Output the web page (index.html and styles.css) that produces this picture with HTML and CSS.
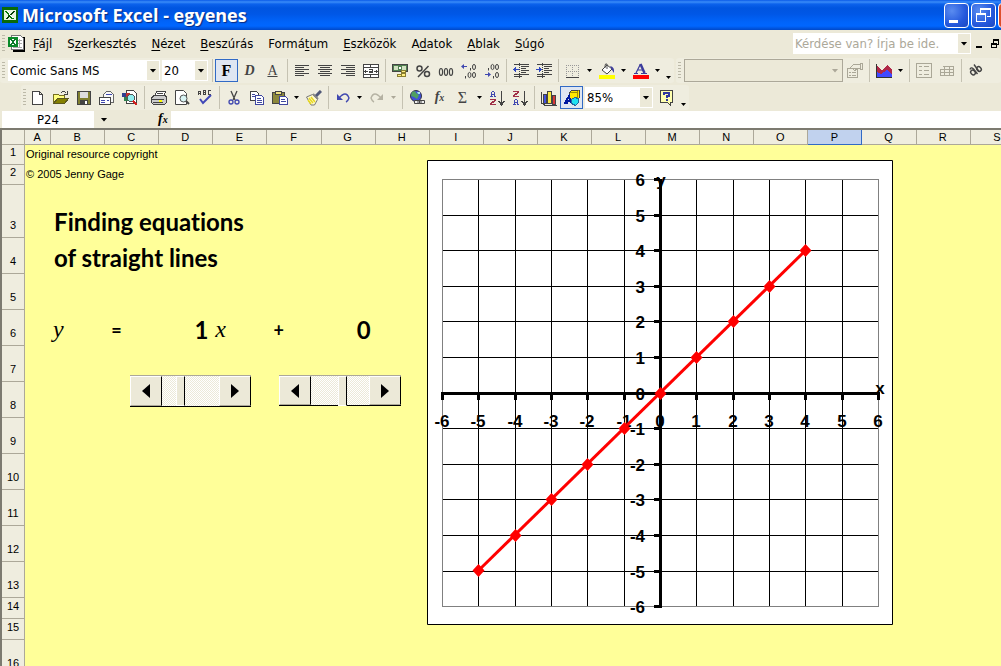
FILE: index.html
```html
<!DOCTYPE html>
<html lang="hu">
<head>
<meta charset="utf-8">
<title>Microsoft Excel - egyenes</title>
<link rel="stylesheet" href="styles.css">
</head>
<body>
<div class="app">
<header class="titlebar">
  <svg class="app-icon" width="16" height="16" viewBox="0 0 16 16" shape-rendering="crispEdges"><path fill="#0a6a0a" d="M0 0h16v16H0z"/><path fill="#e8f4e0" d="M2 3h12v10H2z"/><path fill="#0a7a0a" d="M3 4h3l6 8H9z"/><path fill="#053f05" d="M11 4h2L6 12H4z"/><path fill="#fff" d="M5 4h1l5 7h-1z"/></svg>
  <h1>Microsoft Excel - egyenes</h1>
  <div class="window-buttons">
    <button class="win" aria-label="Kis méret"><svg width="23" height="23"><path fill="#fff" d="M4 16h9v3H4z"/></svg></button>
    <button class="win" aria-label="Előző méret"><svg width="23" height="23" fill="none" stroke="#fff" shape-rendering="crispEdges"><path d="M8.500 9V4.500h10v8H15M8 5.500h11M4.500 9.500h9v8h-9zM4 10.500h10"/></svg></button>
    <button class="win close" aria-label="Bezárás"></button>
  </div>
</header>

<nav class="menubar">
  <span class="grip"></span>
  <svg class="doc-icon" width="18" height="18" viewBox="0 0 18 18" shape-rendering="crispEdges"><path fill="#000" d="M5 2h12v15H5z"/><path fill="#fff" stroke="#777" d="M3.500 .5h9l3 3v11h-12z"/><path stroke="#aaa" d="M9 5.500h5M9 8.500h5M5 12.500h9M11.500 4v9"/><path fill="#0a8a2a" d="M0 2h10v10H0z"/><path fill="#fff" d="M2 4h6v6H2z"/><path fill="#0a7a2a" d="M2 4h2l4 6H6zM6 4h2l-4 6H2z"/></svg>
  <button><u>F</u>ájl</button><button>S<u>z</u>erkesztés</button><button><u>N</u>ézet</button><button><u>B</u>eszúrás</button><button>Formá<u>t</u>um</button><button><u>E</u>szközök</button><button>A<u>d</u>atok</button><button><u>A</u>blak</button><button><u>S</u>úgó</button>
  <div class="combo ask"><input type="text" aria-label="Kérdés" placeholder="Kérdése van? Írja be ide."><span class="drop"><i class="caret"></i></span></div>
  <button class="mdi" aria-label="Munkafüzet kis méret"><svg width="6" height="12"><path d="M0 8h6v2H0z"/></svg></button>
  <button class="mdi" aria-label="Munkafüzet előző méret"><svg width="12" height="12" fill="none" stroke="#000" shape-rendering="crispEdges"><path d="M3.500 5V1.500h5v5H7M3 2.500h6M1.500 5.500h5v4h-5zM1 6.500h6"/></svg></button>
</nav>

<div class="toolrow">
  <div class="toolbar first">
    <span class="grip"></span>
    <div class="combo font"><select aria-label="Betűtípus"><option>Comic Sans MS</option></select><span class="drop"><i class="caret"></i></span></div>
    <div class="combo size"><select aria-label="Betűméret"><option>20</option></select><span class="drop"><i class="caret"></i></span></div>
    <span class="sep"></span>
    <button class="tool letter on" aria-label="Félkövér"><b>F</b></button>
    <button class="tool letter" aria-label="Dőlt"><i>D</i></button>
    <button class="tool letter" aria-label="Aláhúzott"><u>A</u></button>
    <span class="sep"></span>
    <button class="tool" aria-label="Balra zárt"><svg class="ic" viewBox="0 0 16 16" stroke="#444"><path d="M1 2.500h14M1 4.500h9M1 6.500h14M1 8.500h9M1 10.500h14M1 12.500h9"/></svg></button>
    <button class="tool" aria-label="Középre zárt"><svg class="ic" viewBox="0 0 16 16" stroke="#444"><path d="M1 2.500h14M3 4.500h10M1 6.500h14M3 8.500h10M1 10.500h14M3 12.500h10"/></svg></button>
    <button class="tool" aria-label="Jobbra zárt"><svg class="ic" viewBox="0 0 16 16" stroke="#444"><path d="M1 2.500h14M6 4.500h9M1 6.500h14M6 8.500h9M1 10.500h14M6 12.500h9"/></svg></button>
    <button class="tool" aria-label="Cellaegyesítés"><svg class="ic" viewBox="0 0 16 16" fill="none" stroke="#444"><path fill="#fff" d="M.5 1.500h15v13H.5z"/><path d="M0 4.500h16M0 11.500h16M7.500 1v3M7.500 12v3M1 8.500h4M2.500 7v3M11 8.500h4M13.500 7v3M6 6.500h3.500v3.500M9 9.500H6.500V8H9"/></svg></button>
    <span class="sep"></span>
    <button class="tool" aria-label="Pénznem"><svg class="ic" viewBox="0 0 16 16"><path fill="#508050" stroke="#444" d="M.5 1.500h15v7H.5z"/><path fill="#cfe0bf" d="M2 3h12v4H2z"/><path fill="#508050" d="M6 3h4v4H6z"/><path fill="#fff" d="M7 4h2v2H7z"/><path fill="#fff080" stroke="#8a7d30" d="M9.500 7.500h4v2h-4zM9.500 10.500h4v3h-4zM5.500 11.500h4v2h-4z"/></svg></button>
    <button class="tool" aria-label="Százalék"><svg class="ic smooth" viewBox="0 0 16 16" fill="none" stroke="#444" stroke-width="1.500"><circle cx="4.500" cy="5.500" r="2.500"/><circle cx="12" cy="11" r="2.500"/><path d="M13.500 3 3 14"/></svg></button>
    <button class="tool" aria-label="Ezres csoport"><svg class="ic smooth" viewBox="0 0 16 16" fill="none" stroke="#444" stroke-width="1.200"><ellipse cx="3" cy="9" rx="1.600" ry="3.500"/><ellipse cx="8" cy="9" rx="1.600" ry="3.500"/><ellipse cx="13" cy="9" rx="1.600" ry="3.500"/></svg></button>
    <button class="tool" aria-label="Tizedeshelyek növelése"><svg class="ic smooth" viewBox="0 0 16 16" fill="none"><path fill="#4048b0" d="M0 3.500 3 1v2h3v1H3v2z"/><g stroke="#444"><ellipse cx="13" cy="4" rx="1.500" ry="2.600"/><ellipse cx="8.500" cy="12" rx="1.500" ry="2.600"/><ellipse cx="13" cy="12" rx="1.500" ry="2.600"/><path d="M9.500 5v2.500M4.500 13v2.500"/></g></svg></button>
    <button class="tool" aria-label="Tizedeshelyek csökkentése"><svg class="ic smooth" viewBox="0 0 16 16" fill="none"><path fill="#4048b0" d="M7 11.500 4 9v2H1v1h3v2z"/><g stroke="#444"><ellipse cx="8.500" cy="4" rx="1.500" ry="2.600"/><ellipse cx="13" cy="4" rx="1.500" ry="2.600"/><ellipse cx="13" cy="12" rx="1.500" ry="2.600"/><path d="M4.500 5v2.500M9.500 13v2.500"/></g></svg></button>
    <span class="sep"></span>
    <button class="tool" aria-label="Behúzás csökkentése"><svg class="ic" viewBox="0 0 16 16"><path stroke="#444" d="M1 1.500h15M8 3.500h8M8 5.500h5M8 7.500h8M8 9.500h5M1 11.500h15M1 13.500h8"/><path stroke="#444" stroke-dasharray="1 1" d="M6.500 0v16"/><path fill="#3048c0" d="M3 4v5L0 6.500zM3 6h3v1H3z"/></svg></button>
    <button class="tool" aria-label="Behúzás növelése"><svg class="ic" viewBox="0 0 16 16"><path stroke="#444" d="M1 1.500h15M8 3.500h8M8 5.500h5M8 7.500h8M8 9.500h5M1 11.500h15M1 13.500h8"/><path stroke="#444" stroke-dasharray="1 1" d="M6.500 0v16"/><path fill="#3048c0" d="M3 4v5l3-2.500zM0 6h3v1H0z"/></svg></button>
    <span class="sep"></span>
    <button class="tool" aria-label="Szegélyek"><svg class="ic" viewBox="0 0 16 16" fill="none" stroke="#999"><path stroke-dasharray="1 1" d="M1 2.500h13M1 8.500h13M1.500 2v12M7.500 2v12M13.500 2v12"/><path stroke="#444" d="M1 14.500h13"/></svg></button><button class="more" aria-label="Szegélyválaszték"><i class="caret"></i></button>
    <button class="tool" aria-label="Kitöltőszín"><svg class="ic smooth" viewBox="0 0 16 16"><path fill="#fff" stroke="#444" d="m8 2 5 4-5 5-5-4z"/><path fill="none" stroke="#555" d="M8 6V1q-2-1-2 2v2"/><path fill="#4040a0" d="M11 3q5 1 4 7l-2-3z"/><path fill="#ff0" d="M0 12h16v4H0z"/></svg></button><button class="more" aria-label="Kitöltőszínek"><i class="caret"></i></button>
    <button class="tool" aria-label="Betűszín"><svg class="ic smooth" viewBox="0 0 16 16"><path fill="none" stroke="#3c3c9c" stroke-width="1.200" d="m3 10 4.500-9M5 7h5M1 10.500h4M8 10.500h6"/><path stroke="#3c3c9c" stroke-width="2.500" d="m7.500 1 4 9"/><path fill="red" d="M0 12h16v4H0z"/></svg></button><button class="more" aria-label="Betűszínek"><i class="caret"></i></button>
    <button class="more end" aria-label="Eszköztár beállításai"><i class="caret"></i></button>
  </div>
  <div class="toolbar second">
    <span class="grip"></span>
    <div class="combo object off"><select aria-label="Diagramobjektumok" disabled><option></option></select><span class="drop"><i class="caret"></i></span></div>
    <button class="tool" aria-label="Formázás" disabled><svg class="ic" viewBox="0 0 16 16" fill="none" stroke="#aaa797"><path d="M.5 5.500h10v9H.5zM2 9.500h2M5 9.500h4M2 12.500h2M5 12.500h4M3 5l4-4h6v4h-3L8 8 6 6M13 .5h2v6h-2z"/></svg></button>
    <span class="sep"></span>
    <button class="tool" aria-label="Diagramtípus"><svg class="ic" viewBox="0 0 16 16"><path fill="#b02848" d="m1 2 5 6 5-6 5 5v7H1z"/><path fill="#4048ff" d="m1 9 4 2 6-4 5 5v3H1z"/><path stroke="#333" d="M.5 1v14M0 14.500h16"/></svg></button><button class="more" aria-label="Diagramtípusok"><i class="caret"></i></button>
    <span class="sep"></span>
    <button class="tool" aria-label="Jelmagyarázat" disabled><svg class="ic" viewBox="0 0 16 16" fill="none" stroke="#aaa797"><path d="M.5 .5h15v14H.5zM3 3.500h3M3 7.500h3M3 11.500h3M8 3.500h5M8 7.500h5M8 11.500h5"/></svg></button>
    <button class="tool" aria-label="Adattábla" disabled><svg class="ic" viewBox="0 0 16 16" fill="none" stroke="#aaa797"><path d="M4 3.500h10.500v9h-13v-6H14M1 9.500h13M5.500 3v9M10.500 3v9"/></svg></button>
    <span class="sep"></span>
    <button class="tool" aria-label="Szöveg döntése"><svg class="ic smooth" viewBox="0 0 16 16" fill="none" stroke="#444" stroke-width="1.400"><ellipse cx="5" cy="9.500" rx="2.600" ry="2" transform="rotate(45 5 9.500)"/><path d="M2 6.500Q3 3.500 5.500 6l4 5"/><ellipse cx="11" cy="6" rx="2.600" ry="2" transform="rotate(45 11 6)"/><path d="m6 1.500 5 7"/></svg></button>
  </div>
</div>

<div class="toolrow">
  <div class="toolbar standard">
    <span class="grip"></span>
    <button class="tool" aria-label="Új"><svg class="ic" viewBox="0 0 16 16"><path fill="#fff" stroke="#444" d="M2.500 1.500h7l3 3v10h-10zM9.500 1.500v3h3"/></svg></button>
    <button class="tool" aria-label="Megnyitás"><svg class="ic" viewBox="0 0 16 16"><path fill="#ffff80" stroke="#777020" d="M.5 13.500v-9h5l1 1h5v3h-7l-4 5"/><path fill="#848000" stroke="#5b5820" d="M4.500 8.500h11l-4 5H.5z"/><path fill="none" stroke="#444" d="M8 3q3-3 5 0M11 4h3V1"/></svg></button>
    <button class="tool" aria-label="Mentés"><svg class="ic" viewBox="0 0 16 16"><path fill="#808030" stroke="#444" d="M1.500 1.500h13v13h-13z"/><path fill="#ddd" d="M4 2h8v6H4z"/><path fill="#444" d="M4 10h8v4H4z"/><path fill="#fff" d="M9 11h2v3H9z"/></svg></button>
    <button class="tool" aria-label="E-mail"><svg class="ic" viewBox="0 0 16 16"><path fill="#f8f8f8" stroke="#666" d="M4.500 7V4.500l3-3h4l3 3v8h-10z"/><path fill="#fff" stroke="#444" d="M.5 7.500h11v7H.5z"/><path stroke="#4048b0" d="M2 10.500h4M2 12.500h4M8 10.500h2M7 4.500h6"/></svg></button>
    <button class="tool" aria-label="Keresés"><svg class="ic" viewBox="0 0 16 16"><path fill="#fff" stroke="#444" d="M4.500 .5h7l3 3v10h-10z"/><path fill="#304090" d="M0 3h4v4H0z"/><path fill="#c03030" d="M4 3h4v4H4z"/><path fill="#308050" d="M2 7h4v4H2z"/><circle cx="9" cy="8" r="3.500" fill="#90f0f0" stroke="#555"/><path stroke="#d02020" stroke-width="2" d="m11 11 4 4"/></svg></button>
    <span class="sep"></span>
    <button class="tool" aria-label="Nyomtatás"><svg class="ic" viewBox="0 0 16 16"><path fill="#fff" stroke="#444" d="M5.500 1.500h9l-2 5h-9z"/><path fill="#ccc" stroke="#444" d="m1.500 6.500 2-1h11l1 2v5l-2 2h-11l-2-2v-4z"/><path stroke="#444" d="M1 9.500h12M2 12.500h10M6 3.500h6"/><path fill="#ff0" d="M8 10h3v2H8z"/></svg></button>
    <button class="tool" aria-label="Nyomtatási kép"><svg class="ic smooth" viewBox="0 0 16 16"><path fill="#fff" stroke="#444" d="M1.500 .5h8l3 3v11h-11z"/><circle cx="9.500" cy="8.500" r="3.500" fill="#d8f4f4" stroke="#555"/><path stroke="#444" stroke-width="2" d="m12 11 3 3"/></svg></button>
    <button class="tool" aria-label="Helyesírás"><svg class="ic" viewBox="0 0 16 16" fill="none"><path stroke="#444" d="M1.500 5V1.500h2V5M1 3.500h3M6.500 .5h2v4h-2zM6 2.500h3M14 .5h-2.500v4H14"/><path class="smooth" stroke="#4048b8" stroke-width="2" d="m3 9 3 4 8-8"/></svg></button>
    <span class="sep"></span>
    <button class="tool" aria-label="Kivágás"><svg class="ic smooth" viewBox="0 0 16 16" fill="none"><path stroke="#444" stroke-width="1.300" d="m5 1 4 9M11 1l-4 9"/><g stroke="#4048b0" stroke-width="1.300"><circle cx="5" cy="12" r="2"/><circle cx="11" cy="12" r="2"/></g></svg></button>
    <button class="tool" aria-label="Másolás"><svg class="ic" viewBox="0 0 16 16"><path fill="#fff" stroke="#444" d="M1.500 1.500h6l2 2v7h-8z"/><path fill="#fff" stroke="#4048a0" d="M6.500 5.500h6l2 2v7h-8z"/><path stroke="#4048a0" d="M3 4.500h3M3 6.500h3M8 8.500h4M8 10.500h5M8 12.500h5"/></svg></button>
    <button class="tool" aria-label="Beillesztés"><svg class="ic" viewBox="0 0 16 16"><path fill="#8c883c" stroke="#444" d="M.5 2.500h12v11H.5z"/><path fill="#eee080" stroke="#444" d="M3.500 1.500h6v3h-6z"/><path fill="#fff" stroke="#4048a0" d="M7.500 6.500h6l2 2v6h-8z"/><path stroke="#4048a0" d="M9 9.500h4M9 11.500h5"/></svg></button><button class="more" aria-label="Beillesztési lehetőségek"><i class="caret"></i></button>
    <button class="tool" aria-label="Formátummásoló"><svg class="ic smooth" viewBox="0 0 16 16"><path fill="#fffbd0" stroke="#777" d="m.5 7 6-2.500 5 5-3 5.500H5z"/><path stroke="#e8d820" stroke-width="1.500" d="m3 8 4 5m-2-6 4 5m-7-2 3 4"/><path stroke="#888" stroke-width="2" d="m7 4 5 5"/><path stroke="#505878" stroke-width="3" d="m10 6 5-5"/></svg></button>
    <span class="sep"></span>
    <button class="tool" aria-label="Visszavonás"><svg class="ic smooth" viewBox="0 0 16 16"><path fill="#4048b0" d="M2 4v6h6z"/><path fill="none" stroke="#4048b0" stroke-width="1.400" d="M4 8q7-8 10 0-1 3-3 4"/></svg></button><button class="more" aria-label="Visszavonási lista"><i class="caret"></i></button>
    <button class="tool" aria-label="Ismét" disabled><svg class="ic smooth" viewBox="0 0 16 16"><path fill="#b5b2a3" d="M14 4v6H8z"/><path fill="none" stroke="#b5b2a3" stroke-width="1.400" d="M12 8Q5 0 2 8q1 3 3 4"/></svg></button><button class="more" aria-label="Ismétlési lista" disabled><i class="caret"></i></button>
    <span class="sep"></span>
    <button class="tool" aria-label="Hivatkozás"><svg class="ic smooth" viewBox="0 0 16 16"><circle cx="7" cy="6" r="5.500" fill="#4050d8" stroke="#334"/><path fill="#50a060" d="M3 2q4-2 4 1l3 2-2 4-3-2-3-1z"/><path fill="#a8e8f0" d="M8 2h3v2H9z"/><path fill="#eee" stroke="#444" d="M5.500 10.500h5v3h-5zM10.500 10.500h5v3h-5z"/><path stroke="#444" d="M8 12h5"/></svg></button>
    <button class="tool fn" aria-label="Függvény"><i>f<small>x</small></i></button>
    <button class="tool fn sigma" aria-label="AutoSzum">Σ</button><button class="more" aria-label="AutoSzum lista"><i class="caret"></i></button>
    <button class="tool" aria-label="Rendezés növekvő"><svg class="ic" viewBox="0 0 16 16" fill="none"><path stroke="#4048b0" d="M2.500 7V3l1-2h1l1 2v4M2 4.500h4M1 6.500h3M5 6.500h2"/><path stroke="#a03048" stroke-width="1.500" d="M1 9.500h5v1l-4 3v1h5"/><path stroke="#444" stroke-width="1.500" d="M12.500 1v13M10 11l2.500 4 2.500-4"/></svg></button>
    <button class="tool" aria-label="Rendezés csökkenő"><svg class="ic" viewBox="0 0 16 16" fill="none"><path stroke="#a03048" stroke-width="1.500" d="M1 1.500h5v1l-4 3v1h5"/><path stroke="#4048b0" d="M2.500 15v-4l1-2h1l1 2v4M2 12.500h4M1 14.500h3M5 14.500h2"/><path stroke="#444" stroke-width="1.500" d="M12.500 1v13M10 11l2.500 4 2.500-4"/></svg></button>
    <span class="sep"></span>
    <button class="tool" aria-label="Diagramvarázsló"><svg class="ic" viewBox="0 0 16 16"><path fill="none" stroke="#444" d="M.5 2v11l3 2h12"/><path fill="#4050e0" stroke="#444" d="M2.500 4.500h3v9h-3z"/><path fill="#f8e840" stroke="#444" d="M6.500 1.500h4v12h-4z"/><path fill="#d83838" stroke="#444" d="M11.500 5.500h3v9h-3z"/></svg></button>
    <button class="tool on" aria-label="Rajz"><svg class="ic" viewBox="0 0 16 16"><path fill="#ffe800" stroke="#444" d="m5.500 2.500 2-2h8v7l-2 2h-8z"/><path fill="none" stroke="#a09000" d="M6 2.500h7.500v7M13 2l2-2"/><path fill="none" stroke="#0018a0" stroke-width="2" d="m1 13 4-7 2 7M0 13h4M3 11h4"/><path fill="#20e0f0" stroke="#2068a0" d="m7.500 9.500 3-2 4 1v4l-3 3-4-2z"/></svg></button>
    <div class="combo zoom"><input type="text" aria-label="Nagyítás" value="85%"><span class="drop"><i class="caret"></i></span></div>
    <button class="tool" aria-label="Súgó"><svg class="ic" viewBox="0 0 16 16"><path fill="#ffffb0" stroke="#444" d="M1.500 .5h12v12h-2v3l-3-3h-7z"/><path fill="none" stroke="#3038a0" stroke-width="2" d="M5 5V3h5v3H8v2M8 9v2"/></svg></button>
    <button class="more end" aria-label="Eszköztár beállításai"><i class="caret"></i></button>
  </div>
</div>

<div class="formulabar">
  <input class="namebox" type="text" aria-label="Név mező" value="P24">
  <button class="name-drop" aria-label="Nevek"><i class="caret wide"></i></button>
  <button class="fn insert-fn" aria-label="Függvény beszúrása"><i>f<small>x</small></i></button>
  <input class="formula" type="text" aria-label="Szerkesztőléc">
</div>

<main class="sheet">
  <table>
    <colgroup><col class="c-head"><col class="c-a"><col span="18" class="c-std"></colgroup>
    <thead><tr><th></th><th>A</th><th>B</th><th>C</th><th>D</th><th>E</th><th>F</th><th>G</th><th>H</th><th>I</th><th>J</th><th>K</th><th>L</th><th>M</th><th>N</th><th>O</th><th class="current">P</th><th>Q</th><th>R</th><th>S</th></tr></thead>
    <tbody>
      <tr class="r-small"><th>1</th><td class="note" colspan="19">Original resource copyright</td></tr>
      <tr class="r-small"><th>2</th><td class="note" colspan="19">© 2005 Jenny Gage</td></tr>
      <tr class="r-tall"><th>3</th><td></td><td class="comic" colspan="18">Finding equations</td></tr>
      <tr><th>4</th><td></td><td class="comic" colspan="18">of straight lines</td></tr>
      <tr><th>5</th><td colspan="19"></td></tr>
      <tr><th>6</th><td></td><td class="var">y</td><td class="comic sign">=</td><td class="comic num">1</td><td class="var">x</td><td class="comic sign">+</td><td class="comic num">0</td><td colspan="12"></td></tr>
      <tr><th>7</th><td colspan="19"></td></tr>
      <tr><th>8</th><td colspan="19"></td></tr>
      <tr><th>9</th><td colspan="19"></td></tr>
      <tr><th>10</th><td colspan="19"></td></tr>
      <tr><th>11</th><td colspan="19"></td></tr>
      <tr><th>12</th><td colspan="19"></td></tr>
      <tr><th>13</th><td colspan="19"></td></tr>
      <tr class="r-mid"><th>14</th><td colspan="19"></td></tr>
      <tr class="r-mid"><th>15</th><td colspan="19"></td></tr>
      <tr><th>16</th><td colspan="19"></td></tr>
    </tbody>
  </table>

  <div class="scroller slope"><button aria-label="Meredekség csökkentése"><svg width="8" height="14"><path d="M8 0v14L0 7z"/></svg></button><input type="range" aria-label="Meredekség" min="0" max="100" value="29"><button aria-label="Meredekség növelése"><svg width="8" height="14"><path d="M0 0v14l8-7z"/></svg></button></div>
  <div class="scroller intercept"><button aria-label="Tengelymetszet csökkentése"><svg width="8" height="14"><path d="M8 0v14L0 7z"/></svg></button><input type="range" aria-label="Tengelymetszet" min="0" max="100" value="56"><button aria-label="Tengelymetszet növelése"><svg width="8" height="14"><path d="M0 0v14l8-7z"/></svg></button></div>

  <svg class="chart" width="466" height="465" viewBox="0 0 466 465" role="img" aria-label="y = 1x + 0">
    <path fill="#fff" stroke="#000" d="M.5 .5h465v464H.5z"/>
    <path class="gridline" d="M51.500 19v428M88.500 19v428M124.500 19v428M160.500 19v428M197.500 19v428M269.500 19v428M306.500 19v428M342.500 19v428M378.500 19v428M415.500 19v428M15 55.500h437M15 90.500h437M15 126.500h437M15 161.500h437M15 197.500h437M15 268.500h437M15 304.500h437M15 339.500h437M15 375.500h437M15 411.500h437"/>
    <path class="frame" d="M15.500 19.500h436v427h-436z"/>
    <path class="axis" d="M14 233.500h439M233.500 19v429"/>
    <path class="axis" d="M227 19.500h6M227 55.500h6M227 90.500h6M227 126.500h6M227 161.500h6M227 197.500h6M227 233.500h6M227 268.500h6M227 304.500h6M227 339.500h6M227 375.500h6M227 411.500h6M227 446.500h6M15.500 234v6M51.500 234v6M88.500 234v6M124.500 234v6M160.500 234v6M197.500 234v6M233.500 234v6M269.500 234v6M306.500 234v6M342.500 234v6M378.500 234v6M415.500 234v6M451.500 234v6"/>
    <g class="ylabels"><text x="218" y="26">6</text><text x="218" y="62">5</text><text x="218" y="97">4</text><text x="218" y="133">3</text><text x="218" y="168">2</text><text x="218" y="204">1</text><text x="218" y="240">0</text><text x="218" y="275">-1</text><text x="218" y="311">-2</text><text x="218" y="346">-3</text><text x="218" y="382">-4</text><text x="218" y="418">-5</text><text x="218" y="453">-6</text></g>
    <g class="xlabels"><text x="15" y="267">-6</text><text x="51" y="267">-5</text><text x="88" y="267">-4</text><text x="124" y="267">-3</text><text x="160" y="267">-2</text><text x="197" y="267">-1</text><text x="233" y="267">0</text><text x="269" y="267">1</text><text x="306" y="267">2</text><text x="342" y="267">3</text><text x="378" y="267">4</text><text x="415" y="267">5</text><text x="451" y="267">6</text><text x="453" y="234">x</text><text x="234" y="26">y</text></g>
    <path class="series" d="M51.500 410.500 378.500 90.500"/>
    <path fill="red" d="m51.500 404 6 6.500-6 6.500-6-6.500zM88.500 369l6 6.500-6 6.500-6-6.500zM124.500 333l6 6.500-6 6.500-6-6.500zM160.500 298l6 6.500-6 6.500-6-6.500zM197.500 262l6 6.500-6 6.500-6-6.500zM233.500 227l6 6.500-6 6.500-6-6.500zM269.500 191l6 6.500-6 6.500-6-6.500zM306.500 155l6 6.500-6 6.500-6-6.500zM342.500 120l6 6.500-6 6.500-6-6.500zM378.500 84l6 6.500-6 6.500-6-6.500z"/>
  </svg>
</main>
</div>
</body>
</html>
```
FILE: styles.css
```css
* { box-sizing: border-box; }
body { margin: 0; font-family: "DejaVu Sans Condensed", "DejaVu Sans", sans-serif; font-size: 13px; color: #000; background: #ece9d8; }
button, input, select { font: inherit; color: inherit; margin: 0; padding: 0; border: 0; background: none; border-radius: 0; outline: none; }
.app { height: 100vh; overflow: hidden; display: flex; flex-direction: column; }

.titlebar { flex: none; height: 30px; display: flex; align-items: center; gap: 4px; padding-left: 2px; overflow: hidden; background: linear-gradient(#0a5ae8 0, #3a8cf8 2px, #0c62ec 4px, #0055e0 8px, #0057e6 14px, #0064fa 22px, #0066ff 26px, #0048c8 30px); }
.titlebar h1 { margin: 0; color: #fff; font: bold 18px/30px "Open Sans", sans-serif; text-shadow: 1px 1px 1px #0a2a80; }
.app-icon { flex: none; }
.window-buttons { flex: none; display: flex; gap: 2px; margin-left: auto; margin-right: -22px; }
.win { width: 25px; height: 25px; border: 1px solid #fff; border-radius: 4px; background: radial-gradient(circle at 30% 30%, #5a8cf0, #2458dc 60%, #1c48c0); }
.win svg { display: block; }
.win.close { background: linear-gradient(135deg, #e05030, #d84a20); }

.menubar { flex: none; height: 27px; display: flex; align-items: center; padding-left: 2px; white-space: nowrap; }
.menubar > button { margin-right: 15px; line-height: 20px; }
.menubar u { text-underline-offset: 2px; }
.doc-icon { flex: none; margin: 0 7px 0 3px; }
.menubar > .mdi { flex: none; margin: 0 8px 0 0; }
.menubar > .mdi:last-child { margin-right: -1px; }
.mdi svg { display: block; }
.grip { flex: none; width: 3px; height: 18px; background: repeating-linear-gradient(#bcb9a8 0 1px, transparent 1px 3px); }

.combo { flex: none; display: flex; height: 21px; background: #fff; }
.combo input, .combo select { flex: 1; min-width: 0; padding-left: 2px; appearance: none; }
.drop { flex: none; width: 12px; margin: 1px; display: grid; place-items: center; background: #ece9d8; }
.ask { width: 178px; margin-left: auto; margin-right: 5px; }
.ask input::placeholder { color: #aca899; opacity: 1; }
.caret { display: block; width: 5px; height: 3px; background: #000; clip-path: polygon(0 0, 100% 0, 50% 100%); }
.ask .caret, .font .caret, .size .caret, .object .caret, .zoom .caret, .caret.wide { width: 7px; height: 4px; }

.toolrow { flex: none; display: flex; height: 27px; align-items: center; gap: 2px; }
.toolbar { display: flex; align-items: center; height: 25px; background: #efeddf; border-radius: 3px; }
.toolbar.first { padding-left: 2px; }
.toolbar.second { flex: 1; padding-left: 2px; overflow: hidden; }
.toolbar.standard { margin-left: 21px; padding-left: 2px; }
.font { width: 152px; margin: 0 2px 0 3px; }
.size { width: 46px; margin-right: 1px; }
.zoom { width: 68px; margin: 0 2px; }
.object { width: 159px; height: 23px; margin-left: 3px; border: 1px solid #aca899; background: #ece9d8; }
.object .caret, button:disabled .caret { background: #aca899; }
.tool { flex: none; width: 23px; height: 23px; display: grid; place-items: center; }
.tool.on { border: 1px solid #316ac5; background: #dfe6f2; }
.more { flex: none; width: 11px; height: 23px; display: grid; place-items: center; }
.more.end { align-items: end; padding-bottom: 3px; }
.sep { flex: none; width: 6px; height: 23px; background: linear-gradient(#c5c2b2, #c5c2b2) center / 1px 100% no-repeat; }
.ic { display: block; width: 16px; height: 16px; shape-rendering: crispEdges; }
.smooth { shape-rendering: auto; }
.letter { font: 14px "Liberation Serif", serif; color: #444; }
.letter b { font-size: 16px; color: #000; }
.letter i { font-weight: bold; }
.fn { font: bold 14px/16px "Liberation Serif", serif; color: #444; }
.fn small { font-size: 10px; }
.sigma { font-weight: normal; font-size: 16px; }

.formulabar { flex: none; display: flex; height: 17px; padding-left: 2px; }
.namebox { flex: none; width: 92px; background: #fff; text-align: center; }
.name-drop { flex: none; width: 20px; display: grid; place-items: center; }
.insert-fn { flex: none; width: 57px; padding-left: 44px; color: #000; text-align: left; }
.formula { flex: 1; min-width: 0; background: #fff; }

.sheet { position: relative; flex: 1; min-height: 0; overflow: hidden; background: #ff9; border-top: 2px solid #7c7a70; border-left: 2px solid #7c7a70; }
table { table-layout: fixed; width: 1023px; border-collapse: separate; border-spacing: 0; }
.c-head { width: 23px; }
.c-a { width: 26px; }
.c-std { width: 54px; }
th { font: 11px/13px "Liberation Sans", sans-serif; padding: 0; background: #efeddf; border-right: 1px solid #aca899; border-bottom: 1px solid #aca899; }
thead th { height: 15px; padding-right: 1px; }
th.current { background: #c1d2ee; border-color: #316ac5; }
tbody th { vertical-align: bottom; padding-bottom: 5px; }
tbody tr { height: 36px; }
tbody .r-small { height: 20px; }
tbody .r-tall { height: 53px; }
tbody .r-mid { height: 21px; }
td { padding: 0; vertical-align: bottom; white-space: nowrap; line-height: 20px; }
.note { font: 11px/18px "Liberation Sans", sans-serif; padding: 0 0 2px 1px; vertical-align: middle; }
.comic { font: bold 24px/32px Lato, sans-serif; font-variant-ligatures: none; padding-left: 3px; }
.sign { font-size: 18px; padding-left: 6px; }
.num { text-align: right; padding-right: 5px; }
.var { font: italic 24px/34px "Liberation Serif", serif; padding-left: 2px; }

.scroller { position: absolute; display: flex; width: 121px; height: 32px; border-bottom: 1px solid #000; border-top: 1px solid #aca899; }
.slope { left: 128px; top: 245px; }
.intercept { left: 277px; top: 245px; width: 122px; height: 31px; }
.scroller button { flex: none; width: 32px; display: grid; place-items: center; background: #ece9d8; border: 1px solid #fff; border-right-color: #000; border-bottom-color: #aca899; }
.scroller input { flex: 1; min-width: 0; appearance: none; background: repeating-conic-gradient(#fff 0 25%, #ece9d8 0 50%) 0 0 / 2px 2px; }
.scroller input::-webkit-slider-thumb { appearance: none; width: 9px; height: 30px; background: #ece9d8; border: 1px solid #fff; border-right-color: #000; }

.chart { position: absolute; left: 425px; top: 30px; }
.gridline { stroke: #000; fill: none; shape-rendering: crispEdges; }
.frame { stroke: #808080; fill: none; shape-rendering: crispEdges; }
.axis { stroke: #000; stroke-width: 3; shape-rendering: crispEdges; }
.chart text { font: bold 17px "Liberation Sans", sans-serif; }
.ylabels { text-anchor: end; }
.xlabels { text-anchor: middle; }
.series { stroke: red; stroke-width: 3; }
```
